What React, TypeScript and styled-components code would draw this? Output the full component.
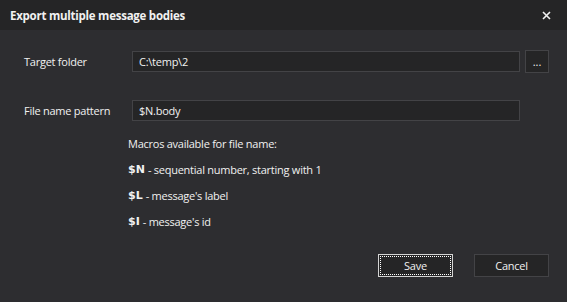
import styled, { createGlobalStyle } from "styled-components";

const GlobalStyle = createGlobalStyle`
  html, body {
    margin: 0;
    padding: 0;
    background: #2d2d30;
  }
  * {
    box-sizing: border-box;
  }
`;

const Dialog = styled.div`
  width: 567px;
  height: 302px;
  display: flex;
  flex-direction: column;
  background: #2d2d30;
  color: #f1f1f1;
  font-family: "Open Sans", "Noto Sans", sans-serif;
  font-size: 11px;
  letter-spacing: -0.25px;
`;

const TitleBar = styled.div`
  height: 30px;
  display: flex;
  align-items: center;
  justify-content: space-between;
  padding: 0 14px 0 10px;
  background: #252526;
`;

const Title = styled.div`
  font-weight: 700;
  font-size: 11.5px;
  color: #f1f1f1;
`;

const CloseButton = styled.button`
  width: 14px;
  height: 14px;
  padding: 0;
  border: none;
  background: transparent;
  display: flex;
  align-items: center;
  justify-content: center;
  cursor: pointer;
`;

const Body = styled.div`
  flex: 1;
  display: flex;
  flex-direction: column;
  padding: 20px 18px 25px 24px;
`;

const FieldRow = styled.div<{ $gap?: number }>`
  display: grid;
  grid-template-columns: 104px 1fr 24px;
  align-items: center;
  column-gap: 5px;
  margin-bottom: ${(p) => p.$gap ?? 0}px;
`;

const Label = styled.label`
  color: #f1f1f1;
`;

const TextInput = styled.input`
  height: 21px;
  margin-left: -1px;
  padding: 0 6px;
  border: 1px solid #434346;
  background: #252526;
  color: #f1f1f1;
  font-family: inherit;
  font-size: 11px;
  letter-spacing: inherit;
  outline: none;
`;

const BrowseButton = styled.button`
  width: 24px;
  height: 23px;
  border: 1px solid #434346;
  background: #252526;
  color: #f1f1f1;
  font-family: inherit;
  font-size: 11px;
  line-height: 1;
  display: flex;
  align-items: flex-end;
  justify-content: center;
  padding: 0 0 5px;
`;

const Macros = styled.div`
  display: flex;
  flex-direction: column;
  padding-left: 104px;
  margin-top: 12px;
  gap: 5px;
`;

const MacroLine = styled.div`
  height: 21px;
  display: flex;
  align-items: center;
  color: #f1f1f1;
  white-space: pre;
`;

const Code = styled.b`
  font-family: "DejaVu Sans", sans-serif;
  font-weight: 700;
  font-size: 11px;
  letter-spacing: 0;
  margin-right: 3px;
`;

const Footer = styled.div`
  margin-top: auto;
  display: flex;
  justify-content: flex-end;
  gap: 21px;
`;

const Button = styled.button<{ $default?: boolean }>`
  width: 75px;
  height: 23px;
  border: 1px solid ${(p) => (p.$default ? "#d4d4d4" : "#434346")};
  background: #252526;
  color: #f1f1f1;
  font-family: inherit;
  font-size: 11px;
  letter-spacing: inherit;
  outline: ${(p) => (p.$default ? "1px dotted #ffffff" : "none")};
  outline-offset: -3px;
  cursor: pointer;
`;

export default function App() {
  return (
    <>
      <GlobalStyle />
      <Dialog>
        <TitleBar>
          <Title>Export multiple message bodies</Title>
          <CloseButton aria-label="Close">
            <svg width="9" height="9" viewBox="0 0 9 9">
              <path d="M1 1L8 8M8 1L1 8" stroke="#f1f1f1" strokeWidth="1.6" />
            </svg>
          </CloseButton>
        </TitleBar>
        <Body>
          <FieldRow $gap={27}>
            <Label>Target folder</Label>
            <TextInput defaultValue="C:\temp\2" />
            <BrowseButton>...</BrowseButton>
          </FieldRow>
          <FieldRow>
            <Label>File name pattern</Label>
            <TextInput defaultValue="$N.body" />
          </FieldRow>
          <Macros>
            <MacroLine>Macros available for file name:</MacroLine>
            <MacroLine>
              <Code>$N</Code>- sequential number, starting with 1
            </MacroLine>
            <MacroLine>
              <Code>$L</Code>- message's label
            </MacroLine>
            <MacroLine>
              <Code>$I</Code>- message's id
            </MacroLine>
          </Macros>
          <Footer>
            <Button $default>Save</Button>
            <Button>Cancel</Button>
          </Footer>
        </Body>
      </Dialog>
    </>
  );
}
